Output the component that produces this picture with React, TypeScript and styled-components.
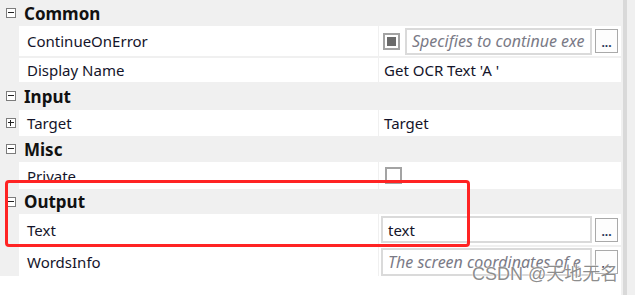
import React from "react";
import styled, { createGlobalStyle } from "styled-components";

const GlobalStyle = createGlobalStyle`
  html, body {
    margin: 0;
    padding: 0;
    background: #ffffff;
  }
  body {
    font-family: "Noto Sans", "Liberation Sans", sans-serif;
  }
`;

const Page = styled.div`
  position: relative;
  width: 635px;
  height: 295px;
  display: flex;
  overflow: hidden;
  background: #ffffff;
`;

const Grid = styled.div`
  width: 621px;
  display: flex;
  flex-direction: column;
  align-self: flex-start;
  background: #f0f0f0;
`;

const ScrollTrack = styled.div`
  width: 14px;
  display: flex;
  background: #f0f0f0;
`;

const Rail = styled.div`
  width: 4px;
  margin-left: 2px;
  background: #d9d9d9;
`;

const Header = styled.div<{ $h: number }>`
  height: ${(p) => p.$h}px;
  display: flex;
  align-items: center;
  font-size: 17px;
  font-weight: 700;
  color: #111;
`;

const Gutter = styled.div`
  width: 19px;
  flex-shrink: 0;
  display: flex;
  align-items: center;
  padding-left: 6px;
  box-sizing: border-box;
`;

const ToggleBox = styled.span`
  position: relative;
  width: 10px;
  height: 10px;
  box-sizing: border-box;
  border: 1px solid #7c7c7c;
  background: #fff;
  &::before {
    content: "";
    position: absolute;
    left: 1px;
    right: 1px;
    top: 3px;
    height: 1px;
    background: #222;
  }
`;

const PlusBox = styled(ToggleBox)`
  &::after {
    content: "";
    position: absolute;
    top: 1px;
    bottom: 1px;
    left: 3px;
    width: 1px;
    background: #222;
  }
`;

const HeaderTitle = styled.span`
  margin-left: 5px;
`;

const Row = styled.div<{ $h: number; $mt?: number }>`
  height: ${(p) => p.$h}px;
  margin-top: ${(p) => p.$mt ?? 0}px;
  display: flex;
  font-size: 15px;
  color: #14142a;
`;

const Label = styled.div`
  width: 360px;
  flex-shrink: 0;
  background: #fff;
  display: flex;
  align-items: center;
  padding-left: 8px;
  box-sizing: border-box;
  border-right: 1px solid #f0f0f0;
  white-space: nowrap;
`;

const Value = styled.div<{ $pl?: number }>`
  flex: 1;
  background: #fff;
  display: flex;
  align-items: center;
  padding-left: ${(p) => p.$pl ?? 5}px;
  white-space: nowrap;
  overflow: hidden;
`;

const Check = styled.span<{ $on?: boolean }>`
  position: relative;
  width: 17px;
  height: 17px;
  flex-shrink: 0;
  box-sizing: border-box;
  border: 2px solid #a3a3a3;
  background: #fff;
  &::after {
    content: "";
    display: ${(p) => (p.$on ? "block" : "none")};
    position: absolute;
    inset: 2px;
    background: #6b6b6b;
  }
`;

const TextBox = styled.div<{ $w: number; $h: number; $italic?: boolean }>`
  width: ${(p) => p.$w}px;
  height: ${(p) => p.$h}px;
  flex-shrink: 0;
  box-sizing: border-box;
  border: 2px solid #dadada;
  background: #fff;
  display: flex;
  align-items: center;
  padding-left: 5px;
  overflow: hidden;
  white-space: nowrap;
  font-size: ${(p) => (p.$italic ? 16 : 15)}px;
  font-style: ${(p) => (p.$italic ? "italic" : "normal")};
  color: ${(p) => (p.$italic ? "#7a7a86" : "#14142a")};
`;

const DotsButton = styled.div`
  width: 23px;
  height: 24px;
  flex-shrink: 0;
  margin-left: 3px;
  box-sizing: border-box;
  border: 1px solid #a9a9a9;
  background: #fdfdfd;
  display: flex;
  align-items: flex-end;
  justify-content: center;
  font-size: 12px;
  font-weight: 700;
  line-height: 14px;
  color: #2a3558;
  padding-bottom: 2px;
`;

const Highlight = styled.div`
  position: absolute;
  left: 5px;
  top: 180px;
  width: 465px;
  height: 67px;
  box-sizing: border-box;
  border: 3px solid #ff2323;
  border-radius: 4px;
  pointer-events: none;
`;

const Watermark = styled.div`
  position: absolute;
  left: 472px;
  top: 259px;
  font-family: "Liberation Sans", "Noto Sans CJK SC", sans-serif;
  font-size: 18px;
  color: rgba(120, 120, 120, 0.85);
  text-shadow: 0 0 2px #fff, 0 0 1px #fff;
  white-space: nowrap;
  pointer-events: none;
`;

const Section = ({ title, h }: { title: string; h: number }) => (
  <Header $h={h}>
    <Gutter>
      <ToggleBox />
    </Gutter>
    <HeaderTitle>{title}</HeaderTitle>
  </Header>
);

export default function App() {
  return (
    <>
      <GlobalStyle />
      <Page>
        <Grid>
          <Section title="Common" h={26} />
          <Row $h={30}>
            <Gutter />
            <Label>ContinueOnError</Label>
            <Value $pl={4}>
              <Check $on />
              <TextBox $w={187} $h={27} $italic style={{ marginLeft: 5 }}>
                Specifies to continue exe
              </TextBox>
              <DotsButton>...</DotsButton>
            </Value>
          </Row>
          <Row $h={24} $mt={2}>
            <Gutter />
            <Label>Display Name</Label>
            <Value>Get OCR Text 'A '</Value>
          </Row>
          <Section title="Input" h={28} />
          <Row $h={26}>
            <Gutter>
              <PlusBox />
            </Gutter>
            <Label>Target</Label>
            <Value>Target</Value>
          </Row>
          <Section title="Misc" h={26} />
          <Row $h={27}>
            <Gutter />
            <Label>Private</Label>
            <Value $pl={6}>
              <Check />
            </Value>
          </Row>
          <Section title="Output" h={25} />
          <Row $h={31}>
            <Gutter />
            <Label>Text</Label>
            <Value $pl={2}>
              <TextBox $w={211} $h={27}>
                text
              </TextBox>
              <DotsButton>...</DotsButton>
            </Value>
          </Row>
          <Row $h={29} $mt={2}>
            <Gutter />
            <Label>WordsInfo</Label>
            <Value $pl={2}>
              <TextBox $w={211} $h={28} $italic>
                The screen coordinates of e
              </TextBox>
              <DotsButton>...</DotsButton>
            </Value>
          </Row>
        </Grid>
        <ScrollTrack>
          <Rail />
        </ScrollTrack>
        <Highlight />
        <Watermark>CSDN @天地无名</Watermark>
      </Page>
    </>
  );
}
